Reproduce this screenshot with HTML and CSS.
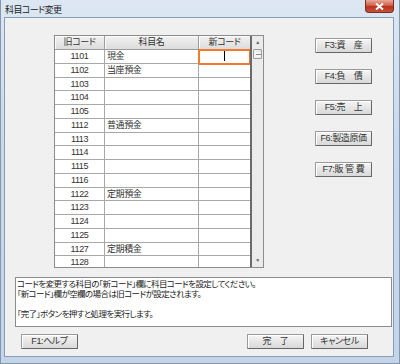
FILE: index.html
```html
<!DOCTYPE html>
<html lang="ja">
<head>
    <meta charset="UTF-8">
    <title>科目コード変更</title>
    <link rel="stylesheet" href="styles.css">
</head>
<body>
    <div class="window">
        <div class="titlebar">
            <span class="title">科目コード変更</span>
            <span class="close">
                <svg width="9" height="7" viewBox="0 0 9 7"><path d="M1 0.5 L8 6.5 M8 0.5 L1 6.5" stroke="#fff" stroke-width="2"/></svg>
            </span>
        </div>
        <div class="client">
            <div class="main">
                <div class="grid">
                    <div class="grid-view">
                        <div class="row head">
                            <div class="cell">旧コード</div>
                            <div class="cell">科目名</div>
                            <div class="cell">新コード</div>
                        </div>
                        <div class="row"><div class="cell code">1101</div><div class="cell name">現金</div><div class="cell new active"><span class="caret"></span></div></div>
                        <div class="row"><div class="cell code">1102</div><div class="cell name">当座預金</div><div class="cell new"></div></div>
                        <div class="row"><div class="cell code">1103</div><div class="cell name"></div><div class="cell new"></div></div>
                        <div class="row"><div class="cell code">1104</div><div class="cell name"></div><div class="cell new"></div></div>
                        <div class="row"><div class="cell code">1105</div><div class="cell name"></div><div class="cell new"></div></div>
                        <div class="row"><div class="cell code">1112</div><div class="cell name">普通預金</div><div class="cell new"></div></div>
                        <div class="row"><div class="cell code">1113</div><div class="cell name"></div><div class="cell new"></div></div>
                        <div class="row"><div class="cell code">1114</div><div class="cell name"></div><div class="cell new"></div></div>
                        <div class="row"><div class="cell code">1115</div><div class="cell name"></div><div class="cell new"></div></div>
                        <div class="row"><div class="cell code">1116</div><div class="cell name"></div><div class="cell new"></div></div>
                        <div class="row"><div class="cell code">1122</div><div class="cell name">定期預金</div><div class="cell new"></div></div>
                        <div class="row"><div class="cell code">1123</div><div class="cell name"></div><div class="cell new"></div></div>
                        <div class="row"><div class="cell code">1124</div><div class="cell name"></div><div class="cell new"></div></div>
                        <div class="row"><div class="cell code">1125</div><div class="cell name"></div><div class="cell new"></div></div>
                        <div class="row"><div class="cell code">1127</div><div class="cell name">定期積金</div><div class="cell new"></div></div>
                        <div class="row"><div class="cell code">1128</div><div class="cell name"></div><div class="cell new"></div></div>
                    </div>
                    <div class="vscroll">
                        <div class="arrow">&#9650;</div>
                        <div class="thumb"></div>
                        <div class="track"></div>
                        <div class="arrow">&#9660;</div>
                    </div>
                </div>
                <div class="side">
                    <button class="btn">F3:資　産</button>
                    <button class="btn">F4:負　債</button>
                    <button class="btn">F5:売　上</button>
                    <button class="btn">F6:製造原価</button>
                    <button class="btn">F7:販 管 費</button>
                </div>
            </div>
            <div class="message">
                <div>コードを変更する科目の「新コード」欄に科目コードを設定してください。</div>
                <div class="gap">「新コード」欄が空欄の場合は旧コードが設定されます。</div>
                <div>「完了」ボタンを押すと処理を実行します。</div>
            </div>
            <div class="footer">
                <button class="btn">F1:ヘルプ</button>
                <button class="btn push">完　了</button>
                <button class="btn">キャンセル</button>
            </div>
        </div>
    </div>
</body>
</html>
```

FILE: styles.css
```css
* {
    box-sizing: border-box;
}
body {
    margin: 0;
    font-family: "Liberation Sans", "Noto Sans CJK JP", sans-serif;
    font-size: 9px;
    letter-spacing: -0.4px;
    color: #333;
    font-feature-settings: "palt";
}
.window {
    width: 400px;
    height: 364px;
    display: flex;
    flex-direction: column;
    padding: 0 5px 6px 3px;
    background: linear-gradient(#dce7f3, #c9d9ec 40%, #c3d5ea);
    border: 1px solid #8797ab;
    border-top: none;
}
.titlebar {
    height: 17px;
    display: flex;
    justify-content: space-between;
    align-items: flex-start;
}
.title {
    padding: 3px 0 0 1px;
    line-height: 14px;
    font-size: 9px;
    letter-spacing: -0.6px;
    color: #222;
}
.close {
    width: 29px;
    height: 13px;
    display: flex;
    align-items: center;
    justify-content: center;
    background: linear-gradient(#e9a99a, #d0604a 45%, #b8321c 55%, #c9523a);
    border: 1px solid #7a2c22;
    border-top: none;
    border-radius: 0 0 4px 4px;
}
.client {
    flex: 1;
    background: #f0f0f0;
    border: 1px solid #8a9cb3;
}
.main {
    display: flex;
    padding: 17px 0 0 49px;
}
.grid {
    display: flex;
    width: 210px;
    height: 233px;
    border: 1px solid #8c8c8c;
    background: #fff;
}
.grid-view {
    width: 195px;
    overflow: hidden;
}
.row {
    display: grid;
    grid-template-columns: 50px 94px 51px;
    height: 13.75px;
}
.head {
    height: 14px;
}
.cell {
    border-right: 1px solid #a8a8a8;
    border-bottom: 1px solid #a8a8a8;
    line-height: 12px;
    white-space: nowrap;
}
.cell:last-child {
    border-right: none;
}
.head .cell {
    text-align: center;
    background: linear-gradient(#f2f2f2, #dcdcdc);
    border-color: #9c9c9c;
    box-shadow: inset 1px 1px 0 #fbfbfb;
}
.code {
    text-align: center;
}
.name {
    padding-left: 2px;
}
.new {
    text-align: center;
}
.active {
    outline: 2px solid #f27a2c;
    outline-offset: -1px;
}
.caret {
    display: inline-block;
    width: 1px;
    height: 10px;
    margin-top: 1px;
    vertical-align: top;
    background: #000;
}
.vscroll {
    width: 13px;
    display: flex;
    flex-direction: column;
    border-left: 2px solid #6a6a6a;
    background: #ebebeb;
}
.arrow {
    height: 13px;
    font-size: 5px;
    line-height: 13px;
    text-align: center;
    color: #606060;
}
.thumb {
    height: 10px;
    margin: 0 1px;
    border: 1px solid #9d9d9d;
    border-radius: 1px;
    background: repeating-linear-gradient(#f4f4f4 0 2px, #8a8a8a 2px 3px) 2px 2px / 5px 5px no-repeat, linear-gradient(90deg, #f4f4f4, #e2e2e2);
}
.track {
    flex: 1;
}
.side {
    display: flex;
    flex-direction: column;
    gap: 16px;
    margin: 3px 0 0 51px;
}
.btn {
    width: 57px;
    height: 15px;
    padding: 0;
    font: inherit;
    letter-spacing: inherit;
    line-height: 13px;
    color: #333;
    background: linear-gradient(#f5f5f5, #e6e6e6 50%, #d9d9d9);
    border: 1px solid #9a9a9a;
    border-right-color: #666;
    border-bottom-color: #666;
    border-radius: 1px;
    box-shadow: inset 1px 1px 0 #fff;
}
.message {
    width: 377px;
    height: 50px;
    margin: 9px 0 0 10px;
    padding: 1px 1px 0;
    background: #fff;
    border: 1px solid #8c8c8c;
    font-size: 8.5px;
    letter-spacing: -0.6px;
    line-height: 10px;
    color: #222;
}
.gap {
    margin-bottom: 10px;
}
.footer {
    display: flex;
    gap: 7px;
    padding: 7px 25px 0 16px;
}
.push {
    margin-left: auto;
}
```
